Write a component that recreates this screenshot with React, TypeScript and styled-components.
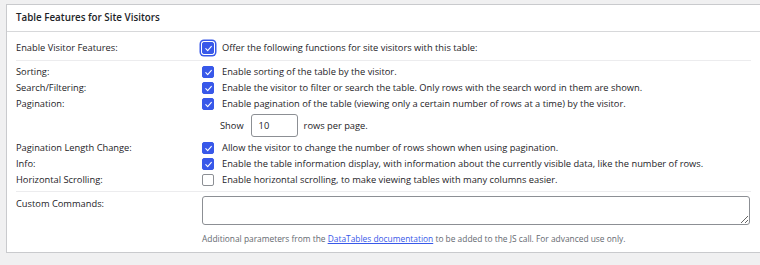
import React from 'react';
import styled, { createGlobalStyle } from 'styled-components';

const Global = createGlobalStyle`
  html, body { margin: 0; padding: 0; background: #f0f0f1; overflow: hidden; }
  body { font-family: "Open Sans", "Noto Sans", sans-serif; color: #1d2327; font-size: 9.3px; }
  * { box-sizing: border-box; }
`;

const Page = styled.div`
  width: 760px;
  height: 265px;
  padding: 4px 0 0 6px;
`;

const Postbox = styled.section`
  width: 760px;
  background: #fff;
  border: 1px solid #c9cacd;
`;

const Header = styled.h2`
  margin: 0;
  height: 27px;
  padding-left: 9px;
  border-bottom: 1px solid #d7d8da;
  font-size: 9.8px;
  font-weight: 600;
  line-height: 26px;
`;

const Body = styled.div`
  padding: 0 14px 5px 9px;
`;

const Group = styled.div<{ $pt: number; $pb: number; $line?: boolean }>`
  padding-top: ${p => p.$pt}px;
  padding-bottom: ${p => p.$pb}px;
  border-top: ${p => (p.$line ? '1px solid #ececee' : 'none')};
`;

const Row = styled.div`
  display: grid;
  grid-template-columns: 186px 1fr;
  line-height: 16px;
`;

const Label = styled.div`
  white-space: nowrap;
`;

const Control = styled.label`
  display: flex;
  align-items: center;
  gap: 8px;
  white-space: nowrap;
`;

const Box = styled.span<{ $checked: boolean; $focus?: boolean }>`
  flex: none;
  width: 12px;
  height: 12px;
  border-radius: 2px;
  display: inline-flex;
  align-items: center;
  justify-content: center;
  background: ${p => (p.$checked ? '#3858e9' : '#fff')};
  border: 1px solid ${p => (p.$checked ? '#3858e9' : '#8c8f94')};
  box-shadow: ${p => (p.$focus ? '0 0 0 1px #fff, 0 0 0 2.5px #3858e9' : 'none')};
`;

const ShowLine = styled.div`
  display: flex;
  align-items: center;
  gap: 6px;
  margin: 2px 0 3px 18px;
`;

const NumberInput = styled.div`
  width: 47px;
  height: 23px;
  border: 1px solid #8c8f94;
  border-radius: 3px;
  padding-left: 7px;
  line-height: 21px;
  margin-left: 1px;
`;

const TextArea = styled.textarea`
  display: block;
  width: 548px;
  height: 29px;
  margin: 0;
  border: 1px solid #8c8f94;
  border-radius: 3px;
  resize: vertical;
  font: inherit;
`;

const Description = styled.p`
  margin: 6px 0 0;
  line-height: 16px;
  font-size: 8.4px;
  color: #646970;
`;

const Link = styled.a`
  color: #3858e9;
  text-decoration: underline;
`;

const Check = () => (
  <svg width="9" height="9" viewBox="0 0 10 10">
    <path d="M2 5.2 L4.1 7.3 L8.2 2.6" fill="none" stroke="#fff" strokeWidth="1.2" strokeLinecap="round" strokeLinejoin="round" />
  </svg>
);

const CheckRow = ({ label, text, checked = true, focus = false }: { label: string; text: string; checked?: boolean; focus?: boolean }) => (
  <Row>
    <Label>{label}</Label>
    <Control>
      <Box $checked={checked} $focus={focus}>{checked && <Check />}</Box>
      <span>{text}</span>
    </Control>
  </Row>
);

export default function App() {
  return (
    <Page>
      <Global />
      <Postbox>
        <Header>Table Features for Site Visitors</Header>
        <Body>
          <Group $pt={8} $pb={4}>
            <CheckRow label="Enable Visitor Features:" text="Offer the following functions for site visitors with this table:" focus />
          </Group>
          <Group $pt={3} $pb={3} $line>
            <CheckRow label="Sorting:" text="Enable sorting of the table by the visitor." />
            <CheckRow label="Search/Filtering:" text="Enable the visitor to filter or search the table. Only rows with the search word in them are shown." />
            <CheckRow label="Pagination:" text="Enable pagination of the table (viewing only a certain number of rows at a time) by the visitor." />
            <Row>
              <Label />
              <ShowLine>
                <span>Show</span>
                <NumberInput>10</NumberInput>
                <span>rows per page.</span>
              </ShowLine>
            </Row>
            <CheckRow label="Pagination Length Change:" text="Allow the visitor to change the number of rows shown when using pagination." />
            <CheckRow label="Info:" text="Enable the table information display, with information about the currently visible data, like the number of rows." />
            <CheckRow label="Horizontal Scrolling:" text="Enable horizontal scrolling, to make viewing tables with many columns easier." checked={false} />
          </Group>
          <Group $pt={4} $pb={0} $line>
            <Row>
              <Label>Custom Commands:</Label>
              <div>
                <TextArea defaultValue="" />
                <Description>
                  Additional parameters from the <Link href="#">DataTables documentation</Link> to be added to the JS call. For advanced use only.
                </Description>
              </div>
            </Row>
          </Group>
        </Body>
      </Postbox>
    </Page>
  );
}
